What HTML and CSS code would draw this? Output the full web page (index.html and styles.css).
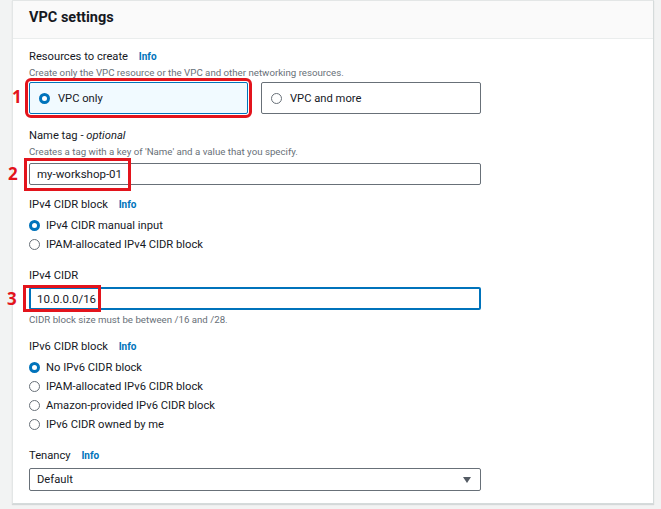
FILE: index.html
```html
<!DOCTYPE html>
<html lang="en">
<head>
<meta charset="utf-8">
<title>VPC settings</title>
<link rel="stylesheet" href="styles.css">
</head>
<body>
<div class="panel">
  <div class="panel-header"><h2>VPC settings</h2></div>
  <div class="panel-body">

    <div class="field">
      <div class="label">Resources to create <a class="info">Info</a></div>
      <div class="desc">Create only the VPC resource or the VPC and other networking resources.</div>
      <div class="tiles">
        <div class="tile selected">
          <span class="marker">1</span>
          <span class="radio on"></span><span>VPC only</span>
        </div>
        <div class="tile">
          <span class="radio"></span><span>VPC and more</span>
        </div>
      </div>
    </div>

    <div class="field f-name">
      <div class="label">Name tag - <i>optional</i></div>
      <div class="desc">Creates a tag with a key of 'Name' and a value that you specify.</div>
      <div class="input-wrap">
        <span class="marker m2">2</span>
        <span class="hl hl2"></span>
        <div class="input">my-workshop-01</div>
      </div>
    </div>

    <div class="field f-cidrblock">
      <div class="label">IPv4 CIDR block <a class="info">Info</a></div>
      <div class="radios">
        <div class="opt"><span class="radio on"></span>IPv4 CIDR manual input</div>
        <div class="opt"><span class="radio"></span>IPAM-allocated IPv4 CIDR block</div>
      </div>
    </div>

    <div class="field f-cidr">
      <div class="label">IPv4 CIDR</div>
      <div class="input-wrap">
        <span class="marker m3">3</span>
        <span class="hl hl3"></span>
        <div class="input focus">10.0.0.0/16</div>
      </div>
      <div class="desc help">CIDR block size must be between /16 and /28.</div>
    </div>

    <div class="field f-v6">
      <div class="label">IPv6 CIDR block <a class="info">Info</a></div>
      <div class="radios">
        <div class="opt"><span class="radio on"></span>No IPv6 CIDR block</div>
        <div class="opt"><span class="radio"></span>IPAM-allocated IPv6 CIDR block</div>
        <div class="opt"><span class="radio"></span>Amazon-provided IPv6 CIDR block</div>
        <div class="opt"><span class="radio"></span>IPv6 CIDR owned by me</div>
      </div>
    </div>

    <div class="field f-ten">
      <div class="label">Tenancy <a class="info">Info</a></div>
      <div class="input select">Default<span class="caret"></span></div>
    </div>

  </div>
</div>
</body>
</html>
```

FILE: styles.css
```css
* { box-sizing: border-box; }
html, body { margin: 0; padding: 0; }
body {
  background: #f2f3f3;
  font-family: Roboto, "Liberation Sans", Arial, sans-serif;
  color: #16191f;
  font-size: 11.2px;
  width: 661px;
  height: 509px;
  overflow: hidden;
}
.panel {
  margin-left: 12px;
  width: 642px;
  height: 504px;
  background: #fff;
  border: 1px solid #e3e6e6;
  border-right-color: #d5dbdb;
  border-bottom-color: #d5dbdb;
  box-shadow: 0 1px 1px rgba(0, 28, 36, 0.12);
}
.panel-header {
  height: 38px;
  background: #fafafa;
  border-bottom: 1px solid #eaeded;
  padding-left: 16px;
  display: flex;
  align-items: center;
}
.panel-header h2 {
  margin: 0;
  font-size: 14.5px;
  font-weight: 700;
  line-height: 16px;
  padding-bottom: 3px;
}
.panel-body {
  padding: 10px 0 0 16px;
}
.field { position: relative; width: 452px; }
.label { line-height: 16px; height: 16px; }
.label i { font-style: italic; }
.info {
  color: #0073bb;
  font-weight: 700;
  font-size: 10px;
  margin-left: 8px;
}
.desc {
  color: #687078;
  font-size: 9.7px;
  line-height: 14px;
  height: 14px;
  margin-top: 1px;
}
.tiles {
  display: grid;
  grid-template-columns: 219px 220px;
  column-gap: 13px;
  margin-top: 2px;
}
.tile {
  position: relative;
  height: 32px;
  border: 1px solid #687078;
  border-radius: 2px;
  display: flex;
  align-items: center;
  padding-left: 9px;
  gap: 8px;
}
.tile.selected {
  background: #f1faff;
  border-color: #0073bb;
  outline: 3px solid #e3141c;
  outline-offset: 1px;
}
.radio {
  width: 11px;
  height: 11px;
  border-radius: 50%;
  border: 1px solid #687078;
  flex: none;
  background: #fff;
}
.radio.on {
  border: 3.5px solid #0073bb;
}
.marker {
  position: absolute;
  color: #e3141c;
  font-weight: 700;
  font-size: 17px;
  line-height: 20px;
  font-family: "Open Sans", Roboto, sans-serif;
}
.tile .marker { left: -18px; top: 4px; }

.f-name { margin-top: 14px; }
.input-wrap { position: relative; margin-top: 4px; }
.input {
  height: 22px;
  border: 1px solid #687078;
  border-radius: 2px;
  padding-left: 7px;
  display: flex;
  align-items: center;
  font-size: 11.5px;
}
.input.focus {
  height: 23px;
  border: 2px solid #0073bb;
  padding-left: 6px;
}
.hl {
  position: absolute;
  border: 3px solid #e3141c;
  pointer-events: none;
}
.hl2 { left: -5px; top: -5px; width: 107px; height: 33px; }
.hl3 { left: -6px; top: -2px; width: 78px; height: 27px; }
.m2 { left: -21px; top: 1px; }
.m3 { left: -22px; top: 2px; }

.f-cidrblock { margin-top: 12px; }
.radios { margin-top: 3px; }
.opt {
  height: 19px;
  display: flex;
  align-items: center;
  gap: 6px;
}
.f-cidr { margin-top: 14px; }
.f-cidr .input-wrap { margin-top: 3px; }
.help { margin-top: 3px; }
.f-v6 { margin-top: 12px; }
.f-ten { margin-top: 14px; }
.select {
  margin-top: 4px;
  height: 23px;
  position: relative;
  font-size: 11.2px;
}
.caret {
  position: absolute;
  right: 9px;
  top: 8px;
  width: 0;
  height: 0;
  border-left: 4.5px solid transparent;
  border-right: 4.5px solid transparent;
  border-top: 6px solid #545b64;
}
```
